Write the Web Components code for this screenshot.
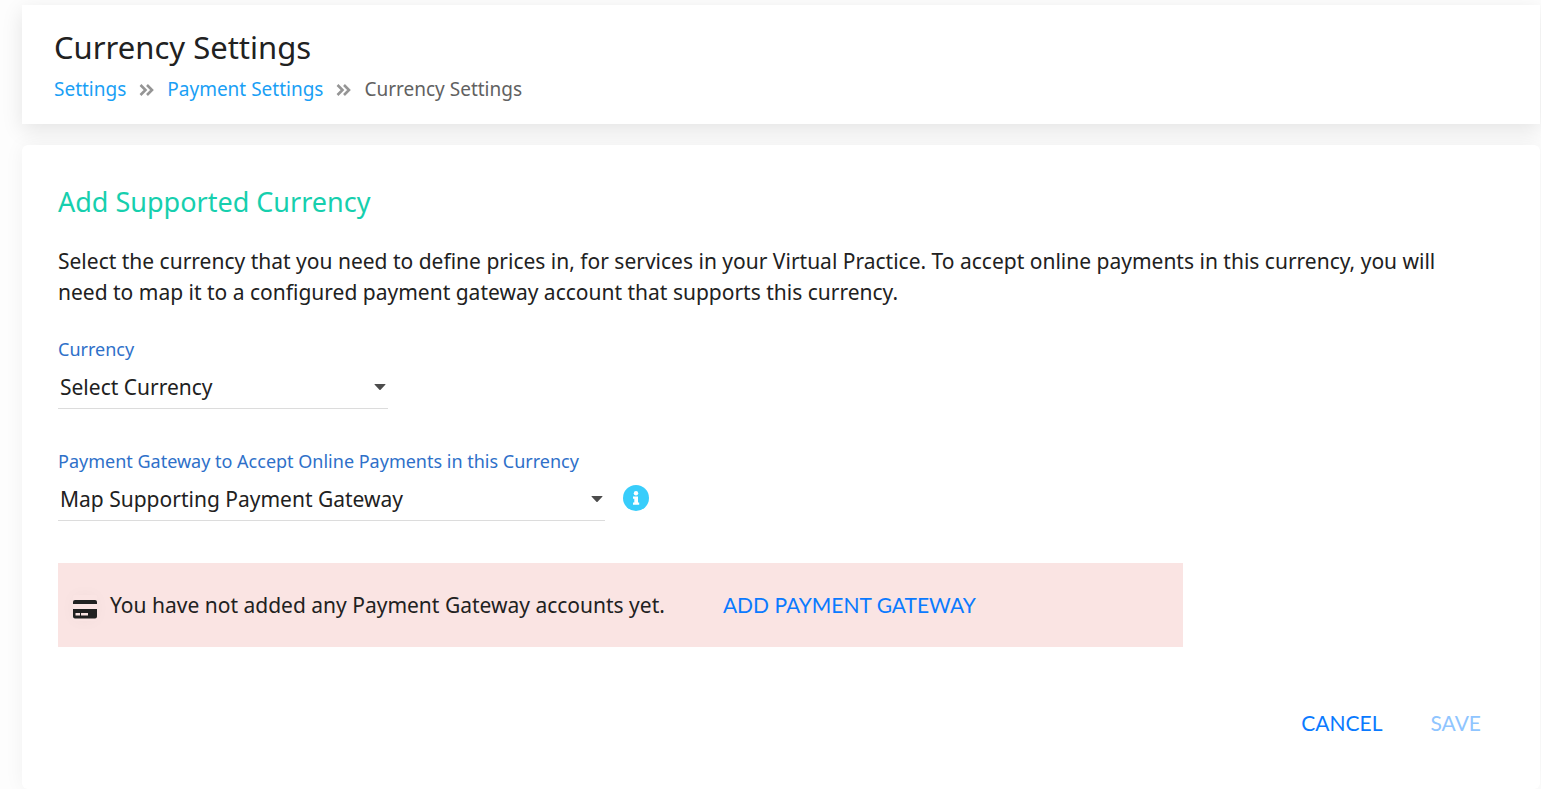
<!DOCTYPE html>
<html lang="en">
<head>
<meta charset="utf-8">
<meta name="viewport" content="width=device-width, initial-scale=1">
<title>Currency Settings</title>
<style>
  body {
    margin: 0;
    background: #fdfdfd;
    color: #212121;
    font-family: "Noto Sans", sans-serif;
    font-size: 21px;
  }
</style>
</head>
<body>
<currency-settings></currency-settings>

<script>
const define = (name, html, setup) => {
  const template = document.createElement('template');
  template.innerHTML = html;

  customElements.define(name, class extends HTMLElement {
    constructor () {
      super();
      this.attachShadow({mode: 'open'})
          .appendChild(template.content.cloneNode(true));
      if (setup) setup(this, this.shadowRoot);
    }
  });
};

define('page-header', `
  <style>
    :host {
      display: block;
      padding: 20px 32px 15px;
      background: #fff;
      box-shadow: 0 6px 20px rgba(0, 0, 0, 0.1);
    }

    h1 {
      margin: 0;
      font-size: 31px;
      font-weight: 400;
      line-height: 44px;
    }

    nav {
      display: flex;
      align-items: center;
      gap: 13px;
      font-size: 19px;
      line-height: 40px;
      color: #616161;
    }
  </style>
  <h1><slot name="title"></slot></h1>
  <nav aria-label="Breadcrumb"><slot></slot></nav>
`);

define('crumb-link', `
  <style>
    :host { display: flex; align-items: center; gap: 13px; }
    a { color: #1a9ff5; text-decoration: none; }
    svg { display: block; width: 15px; height: 12px; margin-top: 2px; }
  </style>
  <a href="#"><slot></slot></a>
  <svg viewBox="0 0 15 12" fill="none" stroke="#959595" stroke-width="2.600" aria-hidden="true">
    <path d="M1.500 1l5 5-5 5M8 1l5 5-5 5"/>
  </svg>
`);

define('content-card', `
  <style>
    :host {
      display: flex;
      flex-direction: column;
      align-items: flex-start;
      padding: 36px;
      border-radius: 6px;
      background: #fff;
      box-shadow: 0 0 20px rgba(0, 0, 0, 0.05);
    }

    h2 {
      margin: 0;
      color: #16cfae;
      font-size: 27px;
      font-weight: 400;
      line-height: 42px;
    }
  </style>
  <h2><slot name="title"></slot></h2>
  <slot></slot>
`);

define('select-field', `
  <style>
    :host { display: block; }

    label {
      display: block;
      color: #2e70c9;
      font-size: 18px;
      line-height: 24px;
    }

    .box {
      display: grid;
      align-items: center;
      margin-top: 5px;
      border-bottom: 1px solid #dcdcdc;
    }

    select {
      grid-area: 1 / 1;
      width: 100%;
      height: 42px;
      padding: 0 32px 0 2px;
      border: 0;
      appearance: none;
      background: transparent;
      color: inherit;
      font: inherit;
    }

    svg {
      grid-area: 1 / 1;
      justify-self: end;
      width: 12px;
      height: 6px;
      margin-right: 2px;
      pointer-events: none;
    }
  </style>
  <label for="field"></label>
  <div class="box">
    <select id="field"><option></option></select>
    <svg viewBox="0 0 12 6" fill="#4c4c4c" aria-hidden="true"><path d="M1 0h10q1 0 .3.8L6.600 5.700q-.6.600-1.200 0L.7.800Q0 0 1 0z"/></svg>
  </div>
`, (host, root) => {
  root.querySelector('label').textContent = host.getAttribute('label');
  root.querySelector('option').textContent = host.getAttribute('value');
});

define('info-button', `
  <style>
    :host { display: block; }
    button { display: block; padding: 0; border: 0; background: none; }
    svg { display: block; width: 26px; height: 26px; }
  </style>
  <button type="button" aria-label="Information">
    <svg viewBox="0 0 26 26" aria-hidden="true">
      <circle cx="13" cy="13" r="13" fill="#38cdfb"/>
      <circle cx="13" cy="8.200" r="2.200" fill="#fff"/>
      <path fill="#fff" d="M10 11.500h5v6h1.200v2.300H10v-2.300h1.300v-3.700H10z"/>
    </svg>
  </button>
`);

define('text-button', `
  <style>
    :host { display: block; }

    button {
      padding: 0;
      border: 0;
      background: none;
      color: #0a7aff;
      font-family: Lato, sans-serif;
      font-size: 21px;
      line-height: 32px;
    }

    button:disabled { color: #8fc5ff; }
  </style>
  <button type="button"><slot></slot></button>
`, (host, root) => {
  root.querySelector('button').disabled = host.hasAttribute('disabled');
});

define('gateway-notice', `
  <style>
    :host {
      display: flex;
      align-items: center;
      box-sizing: border-box;
      padding: 26px 15px;
      background: #fae4e3;
      line-height: 32px;
    }

    /* soft shadow around the card icon */
    .icon {
      margin: 6px 13px 0 0;
      border-radius: 2px;
      box-shadow: 0 0 16px rgba(0, 0, 0, 0.03);
    }

    svg { display: block; width: 24px; height: 26px; }
    ::slotted(text-button) { margin-left: 58px; }
  </style>
  <div class="icon">
    <svg viewBox="0 0 24 26" fill="#212121" aria-hidden="true">
      <path d="M2 5h20q2 0 2 2v2H0V7q0-2 2-2z"/>
      <path fill-rule="evenodd" d="M0 14h24v7.500q0 2-2 2H2q-2 0-2-2zM2.500 18v2.500h4.500V18zM8 18v2.500h7V18z"/>
    </svg>
  </div>
  <slot></slot>
`);

define('currency-settings', `
  <style>
    :host {
      display: flex;
      flex-direction: column;
      gap: 21px;
      box-sizing: border-box;
      min-height: 100vh;
      padding: 5px 1px 0 22px;
      overflow: hidden;
    }

    content-card { flex: 1; }

    p {
      margin: 23px 0 29px;
      padding-right: 24px;
      line-height: 31px;
    }

    .currency { width: 330px; }
    .row { display: flex; align-items: flex-end; gap: 18px; margin: 40px 0 42px; }
    .gateway { width: 547px; }
    info-button { margin-bottom: 10px; }
    gateway-notice { width: 78%; max-width: 1125px; }
    .actions { display: flex; align-self: flex-end; gap: 48px; margin: 60px 23px 0 0; }
  </style>

  <page-header>
    <span slot="title">Currency Settings</span>
    <crumb-link>Settings</crumb-link>
    <crumb-link>Payment Settings</crumb-link>
    <span aria-current="page">Currency Settings</span>
  </page-header>

  <content-card>
    <span slot="title">Add Supported Currency</span>
    <p>Select the currency that you need to define prices in, for services in your Virtual Practice. To accept online payments in this currency, you will need to map it to a configured payment gateway account that supports this currency.</p>
    <select-field class="currency" label="Currency" value="Select Currency"></select-field>
    <div class="row">
      <select-field class="gateway" label="Payment Gateway to Accept Online Payments in this Currency" value="Map Supporting Payment Gateway"></select-field>
      <info-button></info-button>
    </div>
    <gateway-notice>
      <span>You have not added any Payment Gateway accounts yet.</span>
      <text-button>ADD PAYMENT GATEWAY</text-button>
    </gateway-notice>
    <div class="actions">
      <text-button>CANCEL</text-button>
      <text-button disabled>SAVE</text-button>
    </div>
  </content-card>
`);
</script>
</body>
</html>
